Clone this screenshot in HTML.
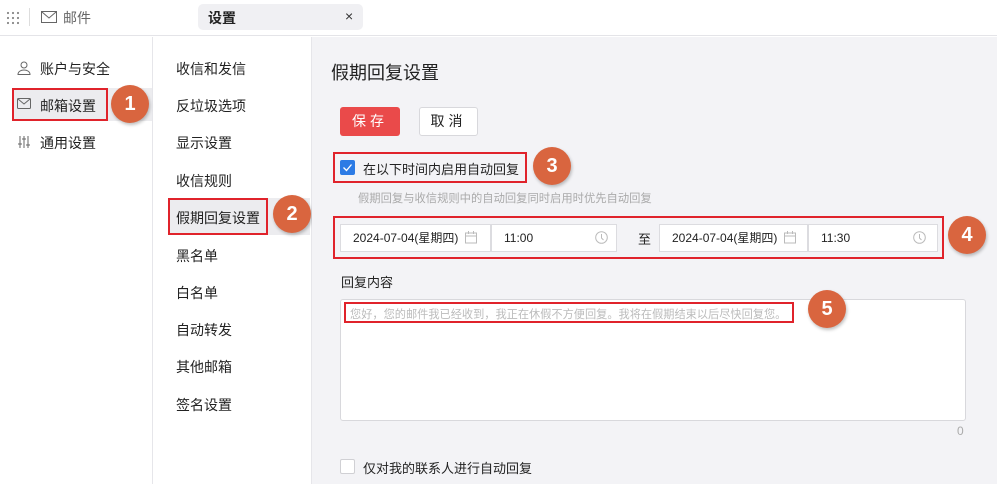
<!DOCTYPE html>
<html><head><meta charset="utf-8"><style>
*{box-sizing:border-box;margin:0;padding:0}
body{width:997px;height:484px;overflow:hidden;background:#fff;font-family:"Liberation Sans","Noto Sans CJK SC",sans-serif;color:#222;position:relative;font-size:14px}
.abs{position:absolute}
.top{left:0;top:0;width:997px;height:36px;border-bottom:1px solid #e4e4e8;background:#fff}
.side{left:0;top:37px;width:153px;height:447px;border-right:1px solid #e6e6ea;background:#fff}
.mid{left:154px;top:37px;width:158px;height:447px;border-right:1px solid #e6e6ea;background:#fff}
.main{left:312px;top:37px;width:685px;height:447px;background:#f3f3f6}
.nav{font-size:14px;color:#222;white-space:nowrap}
.red{border:2px solid #e0232b}
.badge{width:38px;height:38px;border-radius:50%;background:#d9653f;color:#fff;font-weight:bold;font-size:20px;text-align:center;line-height:38px;box-shadow:1px 2px 3px rgba(0,0,0,.25)}
.inp{background:#fff;border:1px solid #dcdce0;height:28px;font-size:12px;line-height:26px;padding-left:12px;color:#222}
</style></head><body>
<div class="abs top"></div>
<svg class="abs" style="left:6px;top:11px" width="14" height="14"><g fill="#888"><circle cx="2" cy="2" r="1.1"/><circle cx="7" cy="2" r="1.1"/><circle cx="12" cy="2" r="1.1"/><circle cx="2" cy="7" r="1.1"/><circle cx="7" cy="7" r="1.1"/><circle cx="12" cy="7" r="1.1"/><circle cx="2" cy="12" r="1.1"/><circle cx="7" cy="12" r="1.1"/><circle cx="12" cy="12" r="1.1"/></g></svg>
<div class="abs" style="left:29px;top:8px;width:1px;height:18px;background:#ddd"></div>
<svg class="abs" style="left:41px;top:11px" width="16" height="12"><rect x=".5" y=".5" width="15" height="11" fill="none" stroke="#666"/><path d="M1 1l7 6 7-6" fill="none" stroke="#666"/></svg>
<div class="abs" style="left:63px;top:8px;font-size:14px;color:#666">邮件</div>
<div class="abs" style="left:198px;top:4px;width:165px;height:26px;background:#f0f0f3;border-radius:5px"></div>
<div class="abs" style="left:208px;top:8px;font-size:14px;font-weight:bold">设置</div>
<div class="abs" style="left:345px;top:8px;font-size:14px;color:#333">×</div>

<div class="abs side"></div>
<div class="abs" style="left:12px;top:88px;width:140px;height:33px;background:#ececef"></div>
<svg class="abs" style="left:17px;top:61px" width="14" height="14"><circle cx="7" cy="4" r="3" fill="none" stroke="#666"/><path d="M1 13.5c0-3 3-4.5 6-4.5s6 1.5 6 4.5z" fill="none" stroke="#666"/></svg>
<div class="abs nav" style="left:40px;top:59px">账户与安全</div>
<svg class="abs" style="left:17px;top:98px" width="14" height="12"><rect x=".5" y=".5" width="13" height="10" rx="1" fill="none" stroke="#666"/><path d="M1 1l6 5 6-5" fill="none" stroke="#666"/></svg>
<div class="abs nav" style="left:40px;top:96px">邮箱设置</div>
<div class="abs red" style="left:12px;top:88px;width:96px;height:33px"></div>
<svg class="abs" style="left:17px;top:135px" width="14" height="14"><path d="M3 1v12M7 1v12M11 1v12" stroke="#666"/><path d="M1 9h4M5 4h4M9 10h4" stroke="#666"/></svg>
<div class="abs nav" style="left:40px;top:133px">通用设置</div>
<div class="abs badge" style="left:111px;top:85px">1</div>

<div class="abs mid"></div>
<div class="abs" style="left:168px;top:198px;width:142px;height:37px;background:#ececef"></div>
<div class="abs nav" style="left:176px;top:59px">收信和发信</div>
<div class="abs nav" style="left:176px;top:96px">反垃圾选项</div>
<div class="abs nav" style="left:176px;top:133px">显示设置</div>
<div class="abs nav" style="left:176px;top:171px">收信规则</div>
<div class="abs nav" style="left:176px;top:208px">假期回复设置</div>
<div class="abs red" style="left:168px;top:198px;width:100px;height:37px"></div>
<div class="abs nav" style="left:176px;top:246px">黑名单</div>
<div class="abs nav" style="left:176px;top:283px">白名单</div>
<div class="abs nav" style="left:176px;top:320px">自动转发</div>
<div class="abs nav" style="left:176px;top:357px">其他邮箱</div>
<div class="abs nav" style="left:176px;top:395px">签名设置</div>
<div class="abs badge" style="left:273px;top:195px">2</div>

<div class="abs main"></div>
<div class="abs" style="left:331px;top:59px;font-size:18px;color:#222">假期回复设置</div>
<div class="abs" style="left:340px;top:107px;width:60px;height:29px;background:#ea4a4a;border-radius:3px;color:#fff;text-align:center;line-height:29px;font-size:14px;letter-spacing:4px">保存</div>
<div class="abs" style="left:419px;top:107px;width:59px;height:29px;background:#fff;border:1px solid #d8d8dc;border-radius:3px;text-align:center;line-height:27px;font-size:14px;letter-spacing:4px">取消</div>
<div class="abs" style="left:340px;top:160px;width:15px;height:15px;background:#2c7be5;border-radius:2px"></div>
<svg class="abs" style="left:340px;top:160px" width="15" height="15"><path d="M3.5 7.5l3 3 5-6" fill="none" stroke="#fff" stroke-width="1.3"/></svg>
<div class="abs" style="left:363px;top:159px;font-size:13px">在以下时间内启用自动回复</div>
<div class="abs red" style="left:333px;top:152px;width:194px;height:31px"></div>
<div class="abs badge" style="left:533px;top:147px">3</div>
<div class="abs" style="left:358px;top:190px;font-size:11.3px;color:#aaa">假期回复与收信规则中的自动回复同时启用时优先自动回复</div>

<div class="abs inp" style="left:340px;top:224px;width:151px">2024-07-04(星期四)</div>
<div class="abs inp" style="left:491px;top:224px;width:126px">11:00</div>
<div class="abs" style="left:638px;top:229px;font-size:13px">至</div>
<div class="abs inp" style="left:659px;top:224px;width:149px">2024-07-04(星期四)</div>
<div class="abs inp" style="left:808px;top:224px;width:130px">11:30</div>
<svg class="abs" style="left:465px;top:231px" width="12" height="13"><rect x=".5" y="2" width="11" height="10" fill="none" stroke="#bbb"/><path d="M.5 5h11M3.5 0v3M8.5 0v3" stroke="#bbb"/></svg>
<svg class="abs" style="left:784px;top:231px" width="12" height="13"><rect x=".5" y="2" width="11" height="10" fill="none" stroke="#bbb"/><path d="M.5 5h11M3.5 0v3M8.5 0v3" stroke="#bbb"/></svg>
<svg class="abs" style="left:595px;top:231px" width="13" height="13"><circle cx="6.5" cy="6.5" r="5.8" fill="none" stroke="#bbb"/><path d="M6.5 3v4l2 2" fill="none" stroke="#bbb"/></svg>
<svg class="abs" style="left:913px;top:231px" width="13" height="13"><circle cx="6.5" cy="6.5" r="5.8" fill="none" stroke="#bbb"/><path d="M6.5 3v4l2 2" fill="none" stroke="#bbb"/></svg>
<div class="abs red" style="left:333px;top:216px;width:611px;height:43px"></div>
<div class="abs badge" style="left:948px;top:216px">4</div>

<div class="abs" style="left:341px;top:272px;font-size:13px">回复内容</div>
<div class="abs" style="left:340px;top:299px;width:626px;height:122px;background:#fff;border:1px solid #d8d8dc;border-radius:3px"></div>
<div class="abs" style="left:350px;top:306px;font-size:11.2px;color:#bbb;white-space:nowrap">您好，您的邮件我已经收到，我正在休假不方便回复。我将在假期结束以后尽快回复您。</div>
<div class="abs red" style="left:344px;top:302px;width:450px;height:21px"></div>
<div class="abs badge" style="left:808px;top:290px">5</div>
<div class="abs" style="left:957px;top:424px;font-size:12px;color:#aaa">0</div>
<div class="abs" style="left:340px;top:459px;width:15px;height:15px;background:#fff;border:1px solid #d0d0d4;border-radius:2px"></div>
<div class="abs" style="left:363px;top:458px;font-size:13px">仅对我的联系人进行自动回复</div>
</body></html>
